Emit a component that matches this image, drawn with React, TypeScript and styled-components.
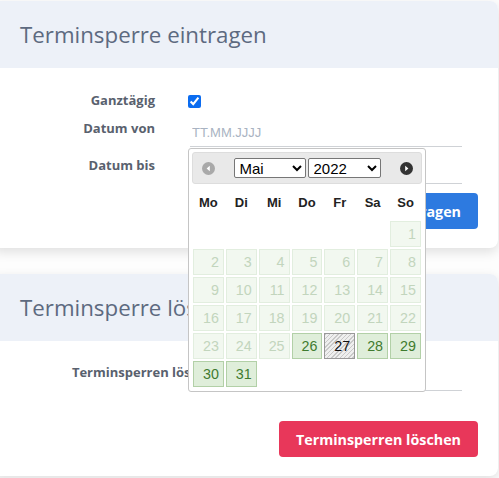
import React from "react";
import styled, { createGlobalStyle } from "styled-components";

const GlobalStyle = createGlobalStyle`
  html, body {
    margin: 0;
    padding: 0;
    background: #fdfdfd;
  }
  body {
    font-family: "Open Sans", "Noto Sans", Arial, sans-serif;
    overflow: hidden;
  }
  * {
    box-sizing: border-box;
  }
`;

const Page = styled.div`
  display: flex;
  flex-direction: column;
  gap: 26px;
  width: 499px;
  height: 478px;
  padding: 1px 1px 0 0;
`;

const Card = styled.section<{ $raised?: boolean }>`
  position: relative;
  z-index: ${(p) => (p.$raised ? 2 : 1)};
  margin-left: -8px;
  background: #fff;
  border-radius: 8px;
  box-shadow: 0 4px 12px rgba(0, 0, 0, 0.12);
`;

const CardHeader = styled.header`
  display: flex;
  align-items: center;
  height: 67px;
  padding-left: 28px;
  background: #edf1f8;
  border-radius: 8px 8px 0 0;
`;

const CardTitle = styled.h2`
  margin: 0;
  font-size: 22.3px;
  font-weight: 400;
  color: #5d6a80;
  white-space: nowrap;
`;

const CardBody = styled.div<{ $top: number }>`
  padding: ${(p) => p.$top}px 20px 19px 28px;
`;

const FormRow = styled.div<{ $label: number; $field: number; $gap: number; $center?: boolean }>`
  display: grid;
  grid-template-columns: ${(p) => p.$label}px ${(p) => p.$field}px;
  column-gap: ${(p) => p.$gap}px;
  align-items: ${(p) => (p.$center ? "center" : "start")};
  min-height: 20px;
  & + & {
    margin-top: 8px;
  }
`;

const Label = styled.label`
  display: block;
  text-align: right;
  font-size: 13px;
  font-weight: 700;
  line-height: 20px;
  color: #59616e;
  white-space: nowrap;
`;

const Field = styled.div`
  position: relative;
`;

const Checkbox = styled.input`
  display: block;
  width: 13px;
  height: 13px;
  margin: 2px 0 0 -2px;
  accent-color: #0b6cf0;
`;

const DateInput = styled.input`
  display: block;
  width: 100%;
  height: 29px;
  padding: 0 2px;
  border: 0;
  border-bottom: 1px solid #cfd2d6;
  background: transparent;
  font: 13px "Liberation Sans", Arial, sans-serif;
  color: #333;
  caret-color: #333;
  outline: none;
  &::placeholder {
    color: #a9b3c2;
  }
`;

const ActionRow = styled.div<{ $top: number }>`
  display: flex;
  justify-content: flex-end;
  margin-top: ${(p) => p.$top}px;
`;

const Button = styled.button<{ $tone: "primary" | "danger" }>`
  height: 36px;
  padding: 0 17px;
  border: 0;
  border-radius: 4px;
  background: ${(p) => (p.$tone === "primary" ? "#2d7ae0" : "#e8375a")};
  color: #fff;
  font-family: "Open Sans", "Noto Sans", Arial, sans-serif;
  font-size: 14.3px;
  font-weight: 700;
  white-space: nowrap;
`;

/* datepicker */

const Picker = styled.div`
  position: absolute;
  left: -2px;
  top: 30px;
  z-index: 10;
  width: 238px;
  padding: 3px;
  background: #fff;
  border: 1px solid #c5c5c5;
  border-radius: 3px;
  font-family: "Liberation Sans", Arial, sans-serif;
  font-size: 14.3px;
`;

const PickerHeader = styled.div`
  display: grid;
  grid-template-columns: 30px 1fr 30px;
  align-items: center;
  height: 32px;
  background: #e9e9e9;
  border: 1px solid #dddddd;
  border-radius: 3px;
`;

const NavButton = styled.span`
  display: flex;
  justify-content: center;
  align-items: center;
`;

const SelectGroup = styled.div`
  display: flex;
  justify-content: center;
  gap: 2px;
`;

const Select = styled.select<{ $w: number }>`
  width: ${(p) => p.$w}px;
  height: 20px;
  padding: 0 0 0 1px;
  border: 1px solid #767676;
  border-radius: 2px;
  background: #fff;
  color: #000;
  font: 15px "Liberation Sans", Arial, sans-serif;
`;

const Table = styled.table`
  width: 100%;
  margin-top: 2px;
  border-collapse: collapse;
  table-layout: fixed;
`;

const Weekday = styled.th`
  padding: 9px 2px;
  font-size: 13px;
  font-weight: 700;
  line-height: 16px;
  text-align: center;
  color: #222;
`;

const DayCell = styled.td`
  padding: 1px;
`;

type DayState = "off" | "on" | "today";

const Day = styled.span<{ $state: DayState }>`
  display: block;
  height: 26px;
  padding: 0 4px;
  line-height: 24px;
  text-align: right;
  border: 1px solid
    ${(p) => (p.$state === "off" ? "#e2eedf" : p.$state === "on" ? "#b2d0a7" : "#999999")};
  background: ${(p) =>
    p.$state === "off"
      ? "#f2f8f0"
      : p.$state === "on"
      ? "#dfeeda"
      : "repeating-linear-gradient(135deg, #c9c9c9 0 1px, #efefef 1px 3px)"};
  color: ${(p) => (p.$state === "off" ? "#c2d5bd" : p.$state === "on" ? "#3f7b2f" : "#111")};
`;

const NavIcon: React.FC<{ dir: "prev" | "next"; disabled?: boolean }> = ({ dir, disabled }) => (
  <svg width="13" height="13" viewBox="0 0 13 13">
    <circle cx="6.5" cy="6.5" r="6.5" fill={disabled ? "#a9a9a9" : "#333"} />
    {dir === "prev" ? (
      <polygon points="7.8,3.8 7.8,9.2 4.6,6.5" fill="#fff" />
    ) : (
      <polygon points="5.2,3.8 5.2,9.2 8.4,6.5" fill="#fff" />
    )}
  </svg>
);

const weekdays = ["Mo", "Di", "Mi", "Do", "Fr", "Sa", "So"];
const months = [
  "Jan", "Feb", "Mär", "Apr", "Mai", "Jun", "Jul", "Aug", "Sep", "Okt", "Nov", "Dez",
];

// Mai 2022 starts on a Sunday
const buildWeeks = () => {
  const cells: (number | null)[] = [null, null, null, null, null, null];
  for (let d = 1; d <= 31; d++) cells.push(d);
  while (cells.length % 7) cells.push(null);
  const weeks: (number | null)[][] = [];
  for (let i = 0; i < cells.length; i += 7) weeks.push(cells.slice(i, i + 7));
  return weeks;
};

const dayState = (d: number): DayState => (d === 27 ? "today" : d >= 26 ? "on" : "off");

const DatePicker: React.FC = () => {
  const weeks = buildWeeks();
  return (
    <Picker>
      <PickerHeader>
        <NavButton>
          <NavIcon dir="prev" disabled />
        </NavButton>
        <SelectGroup>
          <Select $w={72} defaultValue="Mai">
            {months.map((m) => (
              <option key={m}>{m}</option>
            ))}
          </Select>
          <Select $w={73} defaultValue="2022">
            <option>2022</option>
            <option>2023</option>
          </Select>
        </SelectGroup>
        <NavButton>
          <NavIcon dir="next" />
        </NavButton>
      </PickerHeader>
      <Table>
        <thead>
          <tr>
            {weekdays.map((w) => (
              <Weekday key={w}>{w}</Weekday>
            ))}
          </tr>
        </thead>
        <tbody>
          {weeks.map((week, i) => (
            <tr key={i}>
              {week.map((d, j) => (
                <DayCell key={j}>{d && <Day $state={dayState(d)}>{d}</Day>}</DayCell>
              ))}
            </tr>
          ))}
        </tbody>
      </Table>
    </Picker>
  );
};

const App: React.FC = () => {
  return (
    <>
      <GlobalStyle />
      <Page>
        <Card $raised>
          <CardHeader>
            <CardTitle>Terminsperre eintragen</CardTitle>
          </CardHeader>
          <CardBody $top={22}>
            <FormRow $label={135} $field={272} $gap={35} $center>
              <Label>Ganztägig</Label>
              <Checkbox type="checkbox" defaultChecked />
            </FormRow>
            <FormRow $label={135} $field={272} $gap={35}>
              <Label>Datum von</Label>
              <Field>
                <DateInput placeholder="TT.MM.JJJJ" autoFocus />
                <DatePicker />
              </Field>
            </FormRow>
            <FormRow $label={135} $field={272} $gap={35}>
              <Label>Datum bis</Label>
              <Field>
                <DateInput />
              </Field>
            </FormRow>
            <ActionRow $top={9}>
              <Button $tone="primary">Terminsperre eintragen</Button>
            </ActionRow>
          </CardBody>
        </Card>
        <Card>
          <CardHeader>
            <CardTitle>Terminsperre löschen</CardTitle>
          </CardHeader>
          <CardBody $top={21}>
            <FormRow $label={202} $field={225} $gap={15}>
              <Label>Terminsperren löschen</Label>
              <Field>
                <DateInput />
              </Field>
            </FormRow>
            <ActionRow $top={30}>
              <Button $tone="danger">Terminsperren löschen</Button>
            </ActionRow>
          </CardBody>
        </Card>
      </Page>
    </>
  );
};

export default App;
